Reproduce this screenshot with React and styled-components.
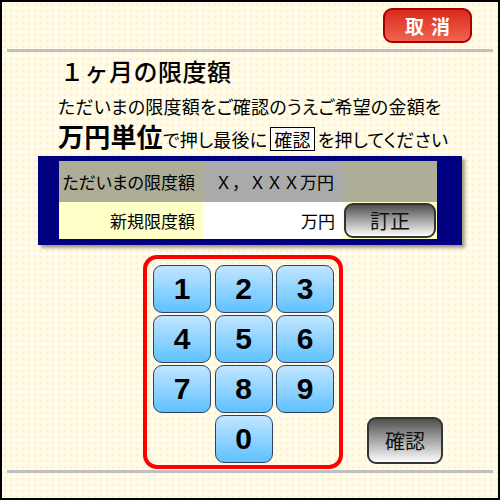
import React from "react";
import styled, { createGlobalStyle } from "styled-components";

const GlobalStyle = createGlobalStyle`
  body {
    margin: 0;
    font-family: "Noto Sans CJK JP", "Noto Sans", sans-serif;
    font-feature-settings: "palt";
  }
`;

const Screen = styled.div`
  width: 500px;
  height: 500px;
  box-sizing: border-box;
  border: 2px solid #000;
  padding: 0 5px;
  display: flex;
  flex-direction: column;
  background-color: #fffcec;
  background-image: radial-gradient(circle, #fff2c4 1.2px, transparent 1.8px);
  background-size: 6px 6px;
  color: #000;
`;

const Header = styled.div`
  height: 47px;
  flex: none;
  box-sizing: border-box;
  padding: 6px 21px 0 0;
  display: flex;
  justify-content: flex-end;
  align-items: flex-start;
`;

const CancelButton = styled.button`
  width: 89px;
  height: 35px;
  border: 2px solid #a80000;
  border-radius: 9px;
  background: linear-gradient(#d92a1c, #f06450);
  color: #fff;
  font-family: inherit;
  font-weight: bold;
  font-size: 19px;
  letter-spacing: 7px;
  padding: 0 0 0 7px;
  line-height: 1;
`;

const Divider = styled.div`
  height: 3px;
  flex: none;
  background: #c0c0c0;
  margin-top: ${(p) => p.$top || 0}px;
`;

const Guide = styled.div`
  margin-left: 51px;
`;

const Title = styled.h1`
  margin: 4px 0 0 2px;
  height: 30px;
  font-size: 24px;
  font-weight: 500;
  line-height: 30px;
  letter-spacing: 0.5px;
  font-feature-settings: normal;
`;

const Line = styled.p`
  margin: ${(p) => p.$top}px 0 0;
  height: ${(p) => p.$lh}px;
  font-size: 18px;
  line-height: ${(p) => p.$lh}px;
  white-space: nowrap;
  letter-spacing: 0.2px;
`;

const Strong = styled.span`
  font-size: 26px;
  font-weight: bold;
  line-height: 30px;
`;

const KeyWord = styled.span`
  display: inline-block;
  border: 1px solid #000;
  background: #fff;
  line-height: 22px;
  padding: 0 3px;
  margin: 0 3px;
  vertical-align: baseline;
`;

const Panel = styled.div`
  margin: 5px 0 0 31px;
  width: 424px;
  box-sizing: border-box;
  padding: 5px 25px 6px 21px;
  background: #000080;
  box-shadow: 3px 3px 3px rgba(60, 40, 20, 0.45);
`;

const Table = styled.div`
  display: grid;
  grid-template-columns: 144px 140px 94px;
  grid-template-rows: 41px 37px;
`;

const Cell = styled.div`
  display: flex;
  align-items: center;
  justify-content: ${(p) => (p.$center ? "center" : "flex-end")};
  padding-right: ${(p) => (p.$center ? 0 : 8)}px;
  background: ${(p) => p.$bg};
  font-size: 17px;
  white-space: nowrap;
  overflow: hidden;
`;

const Amount = styled.span`
  font-feature-settings: normal;
  font-size: 17px;
  margin-right: 1px;
`;

const GrayButton = styled.button`
  width: ${(p) => p.$w}px;
  height: ${(p) => p.$h}px;
  border: 2px solid #333;
  border-radius: 9px;
  background: linear-gradient(#505050, #fdfdfd);
  font-family: inherit;
  font-size: 20px;
  color: #111;
  padding: 0;
  margin-bottom: ${(p) => p.$bottom || 0}px;
  margin-left: ${(p) => p.$left || 0}px;
  line-height: 1;
`;

const KeyRow = styled.div`
  display: flex;
  align-items: flex-end;
  margin: 10px 0 0 136px;
`;

const PadFrame = styled.div`
  width: 200px;
  height: 214px;
  box-sizing: border-box;
  border: 4px solid #ff0000;
  border-radius: 14px;
  padding: 6px;
  display: grid;
  grid-template-columns: repeat(3, 58px);
  grid-auto-rows: 48px;
  column-gap: 3.5px;
  row-gap: 2px;
`;

const Key = styled.button`
  grid-column: ${(p) => p.$col || "auto"};
  border: 1px solid #2a4466;
  border-radius: 9px;
  background: linear-gradient(#c2e5ff, #5fc2ff);
  font-family: "Liberation Sans", Arial, sans-serif;
  font-weight: bold;
  font-size: 30px;
  color: #000;
  padding: 0;
  line-height: 1;
`;

const digits = ["1", "2", "3", "4", "5", "6", "7", "8", "9"];

function App() {
  return (
    <Screen>
      <GlobalStyle />
      <Header>
        <CancelButton>取消</CancelButton>
      </Header>
      <Divider />
      <Guide>
        <Title>１ヶ月の限度額</Title>
        <Line $top={8} $lh={24}>
          ただいまの限度額をご確認のうえご希望の金額を
        </Line>
        <Line $top={3} $lh={30}>
          <Strong>万円単位</Strong>で押し最後に<KeyWord>確認</KeyWord>を押してください
        </Line>
      </Guide>
      <Panel>
        <Table>
          <Cell $bg="#adad98">ただいまの限度額</Cell>
          <Cell $bg="#aaaaaa">
            <Amount>Ｘ，ＸＸＸ万円</Amount>
          </Cell>
          <Cell $bg="#adad98" />
          <Cell $bg="#ffffc8">新規限度額</Cell>
          <Cell $bg="#ffffff">万円</Cell>
          <Cell $bg="#ffffc8" $center>
            <GrayButton $w={92} $h={35}>訂正</GrayButton>
          </Cell>
        </Table>
      </Panel>
      <KeyRow>
        <PadFrame>
          {digits.map((d) => (
            <Key key={d}>{d}</Key>
          ))}
          <Key $col={2}>0</Key>
        </PadFrame>
        <GrayButton $w={76} $h={47} $left={24} $bottom={5}>
          確認
        </GrayButton>
      </KeyRow>
      <Divider $top={1} />
    </Screen>
  );
}

export default App;
